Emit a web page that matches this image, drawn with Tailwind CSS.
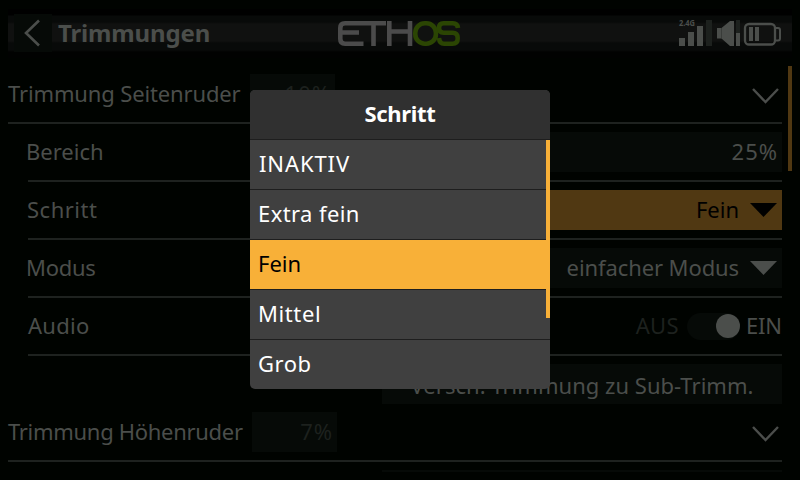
<!DOCTYPE html>
<html lang="de">
<head>
<meta charset="utf-8">
<title>Trimmungen</title>
<script src="https://cdn.jsdelivr.net/npm/@tailwindcss/browser@4"></script>
</head>
<body class="w-[800px] h-[480px] overflow-hidden bg-[#000300] font-['Noto_Sans',sans-serif] text-[22px] leading-[30px] tracking-[0px] text-[#4b4e4b] whitespace-nowrap">
<div class="relative w-[800px] h-[480px] overflow-hidden">
  <header class="h-[66px] px-2 pt-[9px]">
    <div class="h-[49px] flex items-start pt-[5px] bg-[linear-gradient(to_bottom,#000_0_6px,#080a09_7px_13px,#101110_15px_32px,#080a09_34px_41px,#010201_43px_100%)]">
      <div class="ml-1.5 w-[38px] h-[38px] bg-[#060a07]">
        <svg class="w-[38px] h-[38px]" viewBox="0 0 38 38" fill="none" stroke="#4b4e4b" stroke-width="2.6"><path d="M25 6.500L12 19L25 31.500"/></svg>
      </div>
      <h1 class="ml-[6px] mt-1 w-[276px] font-bold text-[24px] tracking-[-0.15px]">Trimmungen</h1>
      <svg class="mt-[5px] w-[130px] h-[30px] shrink-0" viewBox="334 19 130 30" fill="none" stroke-width="4.6">
        <g stroke="#4b4b4b"><path d="M386 23.300H345Q340.300 23.300 340.300 28V39Q340.300 43.700 345 43.700H363.500M340.500 32.500H359M373.500 23V46M389.300 21V46M389.500 31.500H410M410 21V46"/></g>
        <g stroke="#2b4503"><rect x="415.300" y="23.300" width="20.600" height="20.400" rx="9.500"/><path d="M458 28Q457.500 23.300 453 23.300H443.500Q439 23.300 439 28Q439 32.700 443.500 32.700H452.500Q457.700 32.700 457.700 38.200Q457.700 43.700 452.500 43.700H444Q439.500 43.700 439 38"/></g>
      </svg>
      <svg class="ml-[213px] w-[106px] h-[35px] shrink-0 overflow-visible" viewBox="677 14 106 35" fill="#4b4e4b">
        <text x="679" y="26" font-size="8" font-weight="bold" letter-spacing="0" textLength="16" lengthAdjust="spacingAndGlyphs">2.4G</text>
        <rect x="679" y="38" width="6" height="8"/><rect x="688" y="32" width="6" height="14"/><rect x="697" y="26" width="6" height="20"/><rect x="706" y="20" width="6" height="26" fill="#1d211e"/>
        <path d="M717 28H721.500L730 21H734V46H730L721.500 38.500H717Z"/><path d="M721.500 28V38.500" stroke="#2e312e" stroke-width="0.600"/>
        <rect x="736" y="20" width="4" height="13" fill="#1d211e"/><rect x="736" y="33" width="4" height="13"/>
        <rect x="745" y="24" width="30" height="20.500" rx="4" fill="none" stroke="#4b4e4b" stroke-width="2.300"/>
        <path d="M776 28H778Q780 28 780 30V38.500Q780 40.500 778 40.500H776" fill="none" stroke="#4b4e4b" stroke-width="2"/>
        <rect x="749" y="27" width="4" height="14"/><rect x="755" y="27" width="4" height="14"/>
      </svg>
    </div>
  </header>

  <main class="ml-2 w-[774px] flex flex-col">
    <section class="h-[58px] shrink-0 border-b-2 border-[#1e221f] flex items-center">
      <span class="w-[242px] pb-0.5 tracking-[-0.14px]">Trimmung Seitenruder</span>
      <span class="w-[85px] h-10 bg-[#060a07] text-[#1d211e] text-right pr-1 leading-[38px] tracking-[1px]">10%</span>
      <svg class="ml-auto mt-1 mr-0.5 w-7 h-4" viewBox="0 0 28 16" fill="none" stroke="#4b4e4b" stroke-width="2.400"><path d="M1 1L13.500 14L26 1"/></svg>
    </section>
    <section class="h-[58px] shrink-0 ml-5 border-b-2 border-[#1e221f] flex items-center justify-between">
      <span class="-ml-0.5 pb-0.5">Bereich</span>
      <span class="w-[400px] h-10 bg-[#060a07] text-right pr-1 leading-[38px] tracking-[1px]">25%</span>
    </section>
    <section class="h-[58px] shrink-0 ml-5 border-b-2 border-[#1e221f] flex items-center justify-between">
      <span class="-ml-px pb-0.5 tracking-[0.5px]">Schritt</span>
      <div class="w-[400px] h-10 bg-[#503812] text-black flex items-center justify-end">
        <span class="pb-0.5">Fein</span>
        <svg class="ml-[11px] mr-[5px] w-[27px] h-3.5" viewBox="0 0 27 14" fill="currentColor"><path d="M0 0H27L13.500 14Z"/></svg>
      </div>
    </section>
    <section class="h-[58px] shrink-0 ml-5 border-b-2 border-[#1e221f] flex items-center justify-between">
      <span class="-ml-0.5 pb-0.5 tracking-[-0.3px]">Modus</span>
      <div class="w-[400px] h-10 bg-[#060a07] flex items-center justify-end">
        <span class="pb-0.5 tracking-[-0.1px]">einfacher Modus</span>
        <svg class="ml-[11px] mr-[5px] w-[27px] h-3.5" viewBox="0 0 27 14" fill="currentColor"><path d="M0 0H27L13.500 14Z"/></svg>
      </div>
    </section>
    <section class="h-[58px] shrink-0 ml-5 border-b-2 border-[#1e221f] flex items-center">
      <span class="pb-0.5 tracking-[0.3px]">Audio</span>
      <span class="ml-auto pb-0.5 tracking-[0.3px] text-[#1d211e]">AUS</span>
      <div class="ml-2 w-[53px] h-[27px] rounded-full bg-[#060a07] flex items-center justify-end"><div class="size-6 rounded-full bg-[#4b4e4b]"></div></div>
      <span class="ml-1.5 pb-0.5 tracking-[-0.1px]">EIN</span>
    </section>
    <div class="h-12 shrink-0 pt-2 flex justify-end">
      <div class="w-[400px] h-10 bg-[#060a07] text-center leading-[42px] tracking-[0.03px]">Versch. Trimmung zu Sub-Trimm.</div>
    </div>
    <section class="h-[58px] shrink-0 border-b-2 border-[#1e221f] flex items-center">
      <span class="w-[244px] pb-0.5 tracking-[-0.3px]">Trimmung Höhenruder</span>
      <span class="w-[85px] h-10 bg-[#060a07] text-[#1d211e] text-right pr-1 leading-[38px] tracking-[1px]">7%</span>
      <svg class="ml-auto mt-1 mr-0.5 w-7 h-4" viewBox="0 0 28 16" fill="none" stroke="#4b4e4b" stroke-width="2.400"><path d="M1 1L13.500 14L26 1"/></svg>
    </section>
    <div class="mt-2 w-[400px] h-0.5 self-end bg-[#060a07]"></div>
  </main>
  <div class="absolute left-[788px] top-[66px] w-1 h-[105px] bg-[#503812]"></div>

  <div class="absolute left-[250px] top-[90px] w-[300px] h-[299px] rounded-[5px] overflow-hidden bg-[#404040] text-white">
    <div class="h-[50px] bg-[#303030] border-b border-[#1e1e1e] text-center font-bold leading-[47px] tracking-[-0.3px]">Schritt</div>
    <ul class="leading-[47px]">
      <li class="h-[50px] border-b border-[#1e1e1e] pl-[9px] tracking-[0.9px]">INAKTIV</li>
      <li class="h-[50px] border-b border-[#1e1e1e] pl-2 tracking-[0.4px]">Extra fein</li>
      <li class="h-[50px] border-b border-[#1e1e1e] pl-2 bg-[#f8b038] text-black">Fein</li>
      <li class="h-[50px] border-b border-[#1e1e1e] pl-2 tracking-[0.6px]">Mittel</li>
      <li class="h-[49px] pl-2 tracking-[0.5px]">Grob</li>
    </ul>
    <div class="absolute right-0 top-[50px] w-1 h-[178px] bg-[#f8b038]"></div>
  </div>
</div>
</body>
</html>
